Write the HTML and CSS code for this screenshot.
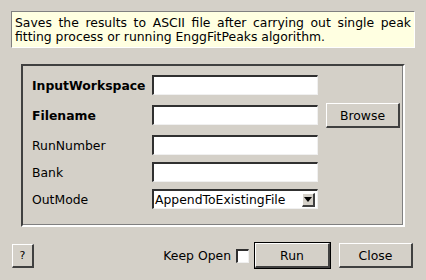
FILE: index.html
```html
<!doctype html>
<html>
    <head>
        <title>SaveEnggFitPeaks</title>
        <link rel="stylesheet" href="styles.css">
    </head>
    <body>
        <p class="description">
            Saves the results to ASCII file after carrying out single peak
            fitting process or running EnggFitPeaks algorithm.
        </p>
        <main class="group">
            <div class="row">
                <label class="name bold">InputWorkspace</label>
                <input type="text" class="field" />
            </div>
            <div class="row">
                <label class="name bold">Filename</label>
                <input type="text" class="field" />
                <button class="button browse">Browse</button>
            </div>
            <div class="row">
                <label class="name">RunNumber</label>
                <input type="text" class="field" />
            </div>
            <div class="row tight">
                <label class="name">Bank</label>
                <input type="text" class="field" />
            </div>
            <div class="row tight">
                <label class="name">OutMode</label>
                <div class="combo">
                    <span>AppendToExistingFile</span>
                    <span class="arrow"></span>
                </div>
            </div>
        </main>
        <footer class="actions">
            <button class="button help">?</button>
            <span class="keep">Keep Open</span>
            <input type="checkbox" class="check" />
            <span class="default"><button class="button run">Run</button></span>
            <button class="button close">Close</button>
        </footer>
    </body>
</html>
```

FILE: styles.css
```css
html,
body {
    margin: 0;
    height: 100%;
}

body {
    background: #d4d0c8;
    font-family: "DejaVu Sans", sans-serif;
    font-size: 12.4px;
    color: #000;
    padding: 11px;
    box-sizing: border-box;
}

.description {
    margin: 0;
    height: 37px;
    box-sizing: border-box;
    padding: 4px 3px 0 3px;
    background: #ffffe1;
    border: 1px solid;
    border-color: #808080 #fff #fff #808080;
    text-align: justify;
    line-height: 14px;
}

.group {
    display: flex;
    flex-direction: column;
    margin: 16px 10px 0 10px;
    height: 163px;
    box-sizing: border-box;
    padding: 9px 0 0 9px;
    border: 2px solid;
    border-color: #404040 #fff #fff #404040;
    box-shadow: inset -1px -1px 0 #808080;
}

.row {
    display: flex;
    align-items: center;
    height: 20px;
}

.row + .row {
    margin-top: 10px;
}

.row.tight {
    margin-top: 7px;
}

.name {
    width: 120px;
}

.bold {
    font-weight: bold;
}

.field {
    margin: 0;
    width: 166px;
    height: 20px;
    box-sizing: border-box;
    padding: 0 2px;
    background: #fff;
    border-style: solid;
    border-width: 2px 1px 1px 2px;
    border-color: #303030 #f0f0f0 #f0f0f0 #303030;
    font: inherit;
    outline: none;
}

.button {
    margin: 0;
    padding: 0;
    background: #d4d0c8;
    border-style: solid;
    border-width: 1px 2px 2px 1px;
    border-color: #fff #404040 #404040 #fff;
    font: inherit;
    color: #000;
}

.browse {
    width: 74px;
    height: 25px;
    margin: -2px 0 -3px 8px;
}

.combo {
    display: flex;
    align-items: center;
    justify-content: space-between;
    width: 166px;
    height: 20px;
    box-sizing: border-box;
    padding: 0 2px 0 1px;
    background: #fff;
    border-style: solid;
    border-width: 2px 1px 1px 2px;
    border-color: #303030 #f0f0f0 #f0f0f0 #303030;
}

.arrow {
    width: 13px;
    height: 14px;
    box-sizing: border-box;
    background: #d4d0c8;
    border-style: solid;
    border-width: 1px 2px 2px 1px;
    border-color: #fff #404040 #404040 #fff;
    display: flex;
    align-items: center;
    justify-content: center;
}

.arrow::after {
    content: "";
    border-left: 4px solid transparent;
    border-right: 4px solid transparent;
    border-top: 5px solid #000;
    margin-top: 1px;
}

.actions {
    display: flex;
    align-items: center;
    margin: 15px 2px 0 1px;
    height: 27px;
}

.help {
    width: 22px;
    height: 24px;
    font-size: 11px;
}

.keep {
    margin-left: auto;
}

.check {
    appearance: none;
    margin: 0 5px 0 5px;
    width: 13px;
    height: 14px;
    box-sizing: border-box;
    background: #fff;
    border-style: solid;
    border-width: 2px 1px 1px 2px;
    border-color: #303030 #f0f0f0 #f0f0f0 #303030;
}

.default {
    display: flex;
    border: 1px solid #000;
}

.run {
    width: 75px;
    height: 25px;
}

.close {
    width: 74px;
    height: 25px;
    margin-left: 8px;
}
```
